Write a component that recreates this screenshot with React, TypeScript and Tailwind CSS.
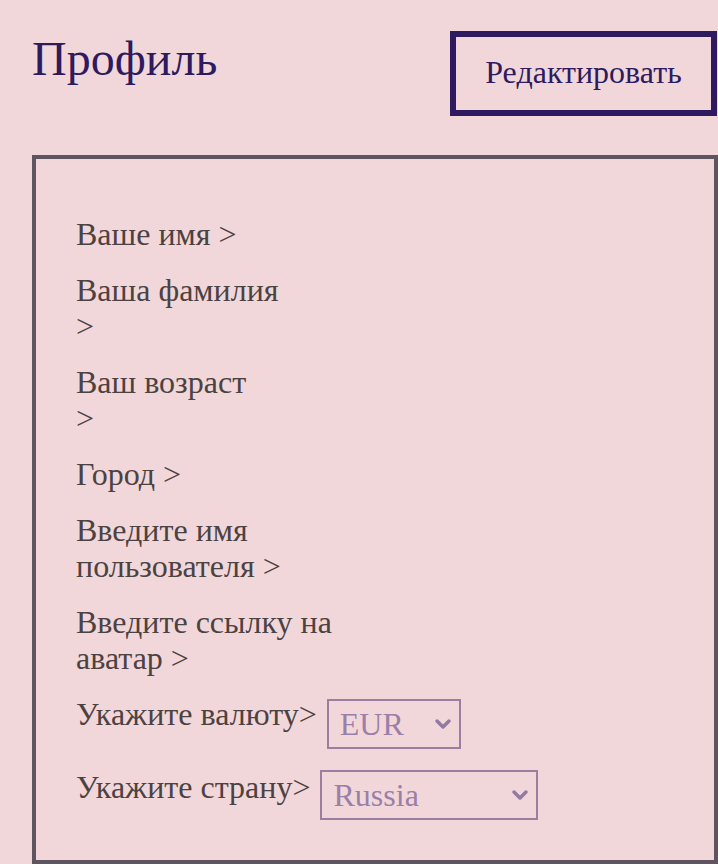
import { useState } from 'react';

const fields: { label: React.ReactNode }[] = [
  { label: 'Ваше имя >' },
  { label: <>Ваша фамилия<br />&gt;</> },
  { label: <>Ваш возраст<br />&gt;</> },
  { label: 'Город >' },
  { label: <>Введите имя<br />пользователя &gt;</> },
  { label: <>Введите ссылку на<br />аватар &gt;</> },
];

type SelectProps = {
  value: string;
  options: string[];
  width: string;
  onChange: (v: string) => void;
};

const Chevron = () => (
  <svg
    className="pointer-events-none absolute right-[9px] top-1/2 -translate-y-1/2"
    width="18"
    height="12"
    viewBox="0 0 18 12"
    fill="none"
  >
    <path d="M3 3 L9 9 L15 3" stroke="#927aa0" strokeWidth="3.5" strokeLinecap="round" strokeLinejoin="round" />
  </svg>
);

const Select = ({ value, options, width, onChange }: SelectProps) => (
  <div className={`relative ${width}`}>
    <select
      value={value}
      onChange={(e) => onChange(e.target.value)}
      className="h-[50px] w-full appearance-none border-2 border-[#9a7fa0] bg-transparent pl-[11px] text-[32px] text-[#9a80a8] outline-none"
    >
      {options.map((o) => (
        <option key={o} value={o}>{o}</option>
      ))}
    </select>
    <Chevron />
  </div>
);

export default function App() {
  const [currency, setCurrency] = useState('EUR');
  const [country, setCountry] = useState('Russia');

  return (
    <div className="min-h-[864px] w-[718px] overflow-hidden bg-[#f2d7da] font-['Liberation_Serif',serif]">
      <div className="flex items-start justify-between pl-[32px] pt-[31px]">
        <h1 className="text-[48px] leading-[56px] text-[#2e1a5f]">Профиль</h1>
        <button className="mr-[1px] flex h-[85px] w-[267px] items-center justify-center border-[6px] border-[#2e1a5f] pb-[3px] text-[32px] text-[#2e1a5f]">
          Редактировать
        </button>
      </div>

      <div className="ml-[32px] mt-[39px] w-[686px] border-4 border-[#5e5560] pb-[40px] pl-[40px] pt-[57px]">
        <div className="flex flex-col gap-[20px] text-[32px] leading-[36px] text-[#4b4242]">
          {fields.map((f, i) => (
            <div key={i}>{f.label}</div>
          ))}
          <div className="flex items-start">
            <span>Укажите валюту&gt;</span>
            <div className="ml-[10px] mt-[3px]">
              <Select value={currency} options={['EUR', 'USD', 'RUB']} width="w-[134px]" onChange={setCurrency} />
            </div>
          </div>
          <div className="flex items-start">
            <span>Укажите страну&gt;</span>
            <div className="ml-[10px] mt-[1px]">
              <Select value={country} options={['Russia', 'Belarus', 'Kazakhstan']} width="w-[218px]" onChange={setCountry} />
            </div>
          </div>
        </div>
      </div>
    </div>
  );
}
